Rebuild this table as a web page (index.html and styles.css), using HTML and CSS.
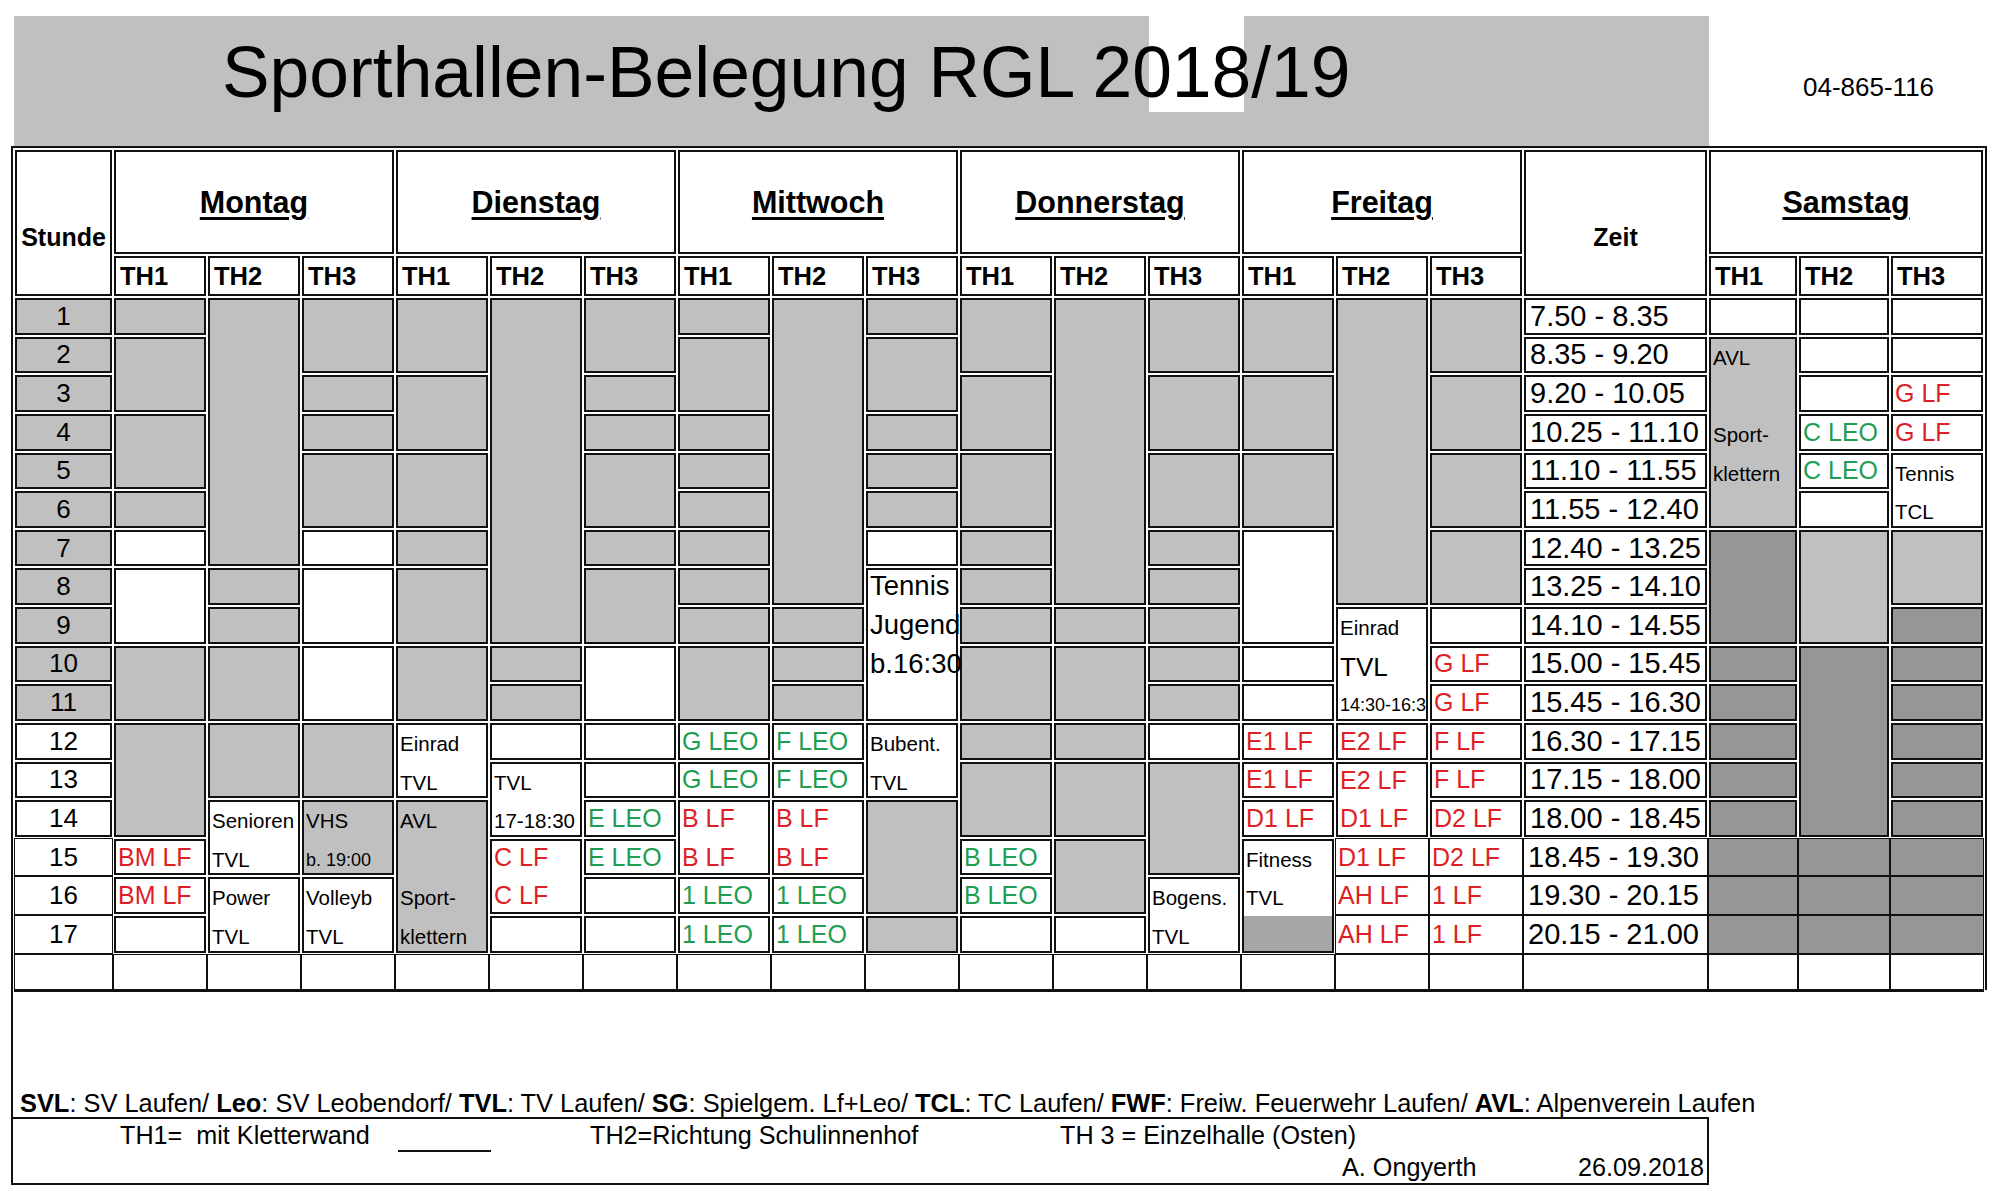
FILE: index.html
```
<!DOCTYPE html>
<html lang="de">
<head>
<meta charset="utf-8">
<title>Sporthallen-Belegung RGL 2018/19</title>
<link rel="stylesheet" href="styles.css">
</head>
<body>
<div class="titlebar">
  <div class="title"><span>Sporthallen-Belegung RGL 2018/19</span></div>
  <div class="code">04-865-116</div>
</div>
<div class="sheet">
  <div class="tbl">
    <div class="grid">
      <!-- header -->
      <div class="c hs r2">Stunde</div>
      <div class="c hd s3">Montag</div>
      <div class="c hd s3">Dienstag</div>
      <div class="c hd s3">Mittwoch</div>
      <div class="c hd s3">Donnerstag</div>
      <div class="c hd s3">Freitag</div>
      <div class="c hs r2">Zeit</div>
      <div class="c hd s3">Samstag</div>
      <div class="c th">TH1</div><div class="c th">TH2</div><div class="c th">TH3</div>
      <div class="c th">TH1</div><div class="c th">TH2</div><div class="c th">TH3</div>
      <div class="c th">TH1</div><div class="c th">TH2</div><div class="c th">TH3</div>
      <div class="c th">TH1</div><div class="c th">TH2</div><div class="c th">TH3</div>
      <div class="c th">TH1</div><div class="c th">TH2</div><div class="c th">TH3</div>
      <div class="c th">TH1</div><div class="c th">TH2</div><div class="c th">TH3</div>

      <!-- row 1 -->
      <div class="c n g">1</div>
      <div class="c g"></div>
      <div class="c g r7"></div>
      <div class="c g r2"></div>
      <div class="c g r2"></div>
      <div class="c g r9"></div>
      <div class="c g r2"></div>
      <div class="c g"></div>
      <div class="c g r8"></div>
      <div class="c g"></div>
      <div class="c g r2"></div>
      <div class="c g r8"></div>
      <div class="c g r2"></div>
      <div class="c g r2"></div>
      <div class="c g r8"></div>
      <div class="c g r2"></div>
      <div class="c t">7.50 - 8.35</div>
      <div class="c"></div>
      <div class="c"></div>
      <div class="c"></div>

      <!-- row 2 -->
      <div class="c n g">2</div>
      <div class="c g r2"></div>
      <div class="c g r2"></div>
      <div class="c g r2"></div>
      <div class="c t">8.35 - 9.20</div>
      <div class="c g r5 ml"><div>AVL</div><div>&nbsp;</div><div>Sport-</div><div>klettern</div></div>
      <div class="c"></div>
      <div class="c"></div>

      <!-- row 3 -->
      <div class="c n g">3</div>
      <div class="c g"></div>
      <div class="c g r2"></div>
      <div class="c g"></div>
      <div class="c g r2"></div>
      <div class="c g r2"></div>
      <div class="c g r2"></div>
      <div class="c g r2"></div>
      <div class="c t">9.20 - 10.05</div>
      <div class="c"></div>
      <div class="c lab red">G LF</div>

      <!-- row 4 -->
      <div class="c n g">4</div>
      <div class="c g r2"></div>
      <div class="c g"></div>
      <div class="c g"></div>
      <div class="c g"></div>
      <div class="c g"></div>
      <div class="c t">10.25 - 11.10</div>
      <div class="c lab grn">C LEO</div>
      <div class="c lab red">G LF</div>

      <!-- row 5 -->
      <div class="c n g">5</div>
      <div class="c g r2"></div>
      <div class="c g r2"></div>
      <div class="c g r2"></div>
      <div class="c g"></div>
      <div class="c g"></div>
      <div class="c g r2"></div>
      <div class="c g r2"></div>
      <div class="c g r2"></div>
      <div class="c g r2"></div>
      <div class="c t">11.10 - 11.55</div>
      <div class="c lab grn">C LEO</div>
      <div class="c r2 ml"><div>Tennis</div><div>TCL</div></div>

      <!-- row 6 -->
      <div class="c n g">6</div>
      <div class="c g"></div>
      <div class="c g"></div>
      <div class="c g"></div>
      <div class="c t">11.55 - 12.40</div>
      <div class="c"></div>

      <!-- row 7 -->
      <div class="c n g">7</div>
      <div class="c"></div>
      <div class="c"></div>
      <div class="c g"></div>
      <div class="c g"></div>
      <div class="c g"></div>
      <div class="c"></div>
      <div class="c g"></div>
      <div class="c g"></div>
      <div class="c r3"></div>
      <div class="c g r2"></div>
      <div class="c t">12.40 - 13.25</div>
      <div class="c dg r3"></div>
      <div class="c g r3"></div>
      <div class="c g r2"></div>

      <!-- row 8 -->
      <div class="c n g">8</div>
      <div class="c r2"></div>
      <div class="c g"></div>
      <div class="c r2"></div>
      <div class="c g r2"></div>
      <div class="c g r2"></div>
      <div class="c g"></div>
      <div class="c r4 ml mid big over"><div>Tennis</div><div>Jugend</div><div>b.16:30</div></div>
      <div class="c g"></div>
      <div class="c g"></div>
      <div class="c t">13.25 - 14.10</div>

      <!-- row 9 -->
      <div class="c n g">9</div>
      <div class="c g"></div>
      <div class="c g"></div>
      <div class="c g"></div>
      <div class="c g"></div>
      <div class="c g"></div>
      <div class="c g"></div>
      <div class="c r3 ml clip"><div>Einrad</div><div class="bigl">TVL</div><div class="sm">14:30-16:3</div></div>
      <div class="c"></div>
      <div class="c t">14.10 - 14.55</div>
      <div class="c dg"></div>

      <!-- row 10 -->
      <div class="c n g">10</div>
      <div class="c g r2"></div>
      <div class="c g r2"></div>
      <div class="c r2"></div>
      <div class="c g r2"></div>
      <div class="c g"></div>
      <div class="c r2"></div>
      <div class="c g r2"></div>
      <div class="c g"></div>
      <div class="c g r2"></div>
      <div class="c g r2"></div>
      <div class="c g"></div>
      <div class="c"></div>
      <div class="c lab red">G LF</div>
      <div class="c t">15.00 - 15.45</div>
      <div class="c dg"></div>
      <div class="c dg r5"></div>
      <div class="c dg"></div>

      <!-- row 11 -->
      <div class="c n g">11</div>
      <div class="c g"></div>
      <div class="c g"></div>
      <div class="c g"></div>
      <div class="c"></div>
      <div class="c lab red">G LF</div>
      <div class="c t">15.45 - 16.30</div>
      <div class="c dg"></div>
      <div class="c dg"></div>

      <!-- row 12 -->
      <div class="c n">12</div>
      <div class="c g r3"></div>
      <div class="c g r2"></div>
      <div class="c g r2"></div>
      <div class="c r2 ml"><div>Einrad</div><div>TVL</div></div>
      <div class="c"></div>
      <div class="c"></div>
      <div class="c lab grn">G LEO</div>
      <div class="c lab grn">F LEO</div>
      <div class="c r2 ml"><div>Bubent.</div><div>TVL</div></div>
      <div class="c g"></div>
      <div class="c g"></div>
      <div class="c"></div>
      <div class="c lab red">E1 LF</div>
      <div class="c lab red">E2 LF</div>
      <div class="c lab red">F LF</div>
      <div class="c t">16.30 - 17.15</div>
      <div class="c dg"></div>
      <div class="c dg"></div>

      <!-- row 13 -->
      <div class="c n">13</div>
      <div class="c r2 ml"><div>TVL</div><div>17-18:30</div></div>
      <div class="c"></div>
      <div class="c lab grn">G LEO</div>
      <div class="c lab grn">F LEO</div>
      <div class="c g r2"></div>
      <div class="c g r2"></div>
      <div class="c g r3"></div>
      <div class="c lab red">E1 LF</div>
      <div class="c r2 ml mid lbl red"><div>E2 LF</div><div>D1 LF</div></div>
      <div class="c lab red">F LF</div>
      <div class="c t">17.15 - 18.00</div>
      <div class="c dg"></div>
      <div class="c dg"></div>

      <!-- row 14 -->
      <div class="c n">14</div>
      <div class="c r2 ml"><div>Senioren</div><div>TVL</div></div>
      <div class="c g r2 ml"><div>VHS</div><div class="sm">b. 19:00</div></div>
      <div class="c g r4 ml"><div>AVL</div><div>&nbsp;</div><div>Sport-</div><div>klettern</div></div>
      <div class="c lab grn">E LEO</div>
      <div class="c r2 ml mid lbl red"><div>B LF</div><div>B LF</div></div>
      <div class="c r2 ml mid lbl red"><div>B LF</div><div>B LF</div></div>
      <div class="c g r3"></div>
      <div class="c lab red">D1 LF</div>
      <div class="c lab red">D2 LF</div>
      <div class="c t">18.00 - 18.45</div>
      <div class="c dg"></div>
      <div class="c dg"></div>

      <!-- row 15 -->
      <div class="c n sg">15</div>
      <div class="c lab red">BM LF</div>
      <div class="c r2 ml mid lbl red"><div>C LF</div><div>C LF</div></div>
      <div class="c lab grn">E LEO</div>
      <div class="c lab grn">B LEO</div>
      <div class="c g r2"></div>
      <div class="c r3 ml fit"><div>Fitness</div><div>TVL</div></div>
      <div class="c lab red sg">D1 LF</div>
      <div class="c lab red sg">D2 LF</div>
      <div class="c t sg">18.45 - 19.30</div>
      <div class="c dg sg"></div>
      <div class="c dg sg"></div>
      <div class="c dg sg"></div>

      <!-- row 16 -->
      <div class="c n sg">16</div>
      <div class="c lab red">BM LF</div>
      <div class="c r2 ml"><div>Power</div><div>TVL</div></div>
      <div class="c r2 ml"><div>Volleyb</div><div>TVL</div></div>
      <div class="c"></div>
      <div class="c lab grn">1 LEO</div>
      <div class="c lab grn">1 LEO</div>
      <div class="c lab grn">B LEO</div>
      <div class="c r2 ml"><div>Bogens.</div><div>TVL</div></div>
      <div class="c lab red sg">AH LF</div>
      <div class="c lab red sg">1 LF</div>
      <div class="c t sg">19.30 - 20.15</div>
      <div class="c dg sg"></div>
      <div class="c dg sg"></div>
      <div class="c dg sg"></div>

      <!-- row 17 -->
      <div class="c n sg">17</div>
      <div class="c"></div>
      <div class="c"></div>
      <div class="c"></div>
      <div class="c lab grn">1 LEO</div>
      <div class="c lab grn">1 LEO</div>
      <div class="c g"></div>
      <div class="c"></div>
      <div class="c"></div>
      <div class="c lab red sg">AH LF</div>
      <div class="c lab red sg">1 LF</div>
      <div class="c t sg">20.15 - 21.00</div>
      <div class="c dg sg"></div>
      <div class="c dg sg"></div>
      <div class="c dg sg"></div>

      <!-- empty row -->
      <div class="c e"></div><div class="c e"></div><div class="c e"></div><div class="c e"></div>
      <div class="c e"></div><div class="c e"></div><div class="c e"></div><div class="c e"></div>
      <div class="c e"></div><div class="c e"></div><div class="c e"></div><div class="c e"></div>
      <div class="c e"></div><div class="c e"></div><div class="c e"></div><div class="c e"></div>
      <div class="c e"></div><div class="c e"></div><div class="c e"></div><div class="c e"></div>
    </div>
  </div>
  <div class="foot">
    <p class="legend"><b>SVL</b>: SV Laufen/ <b>Leo</b>: SV Leobendorf/ <b>TVL</b>: TV Laufen/ <b>SG</b>: Spielgem. Lf+Leo/ <b>TCL</b>: TC Laufen/ <b>FWF</b>: Freiw. Feuerwehr Laufen/ <b>AVL</b>: Alpenverein Laufen</p>
    <div class="box">
      <div class="bl1"><span class="k1">TH1=&nbsp; mit Kletterwand</span><span class="uline"></span><span class="k3">TH2=Richtung Schulinnenhof</span><span>TH 3 = Einzelhalle (Osten)</span></div>
      <div class="bl2"><span class="k4">A. Ongyerth</span><span>26.09.2018</span></div>
    </div>
  </div>
</div>
</body>
</html>
```
FILE: styles.css
```
* { box-sizing: border-box; }
html, body { margin: 0; padding: 0; background: #fff; }
body {
  font-family: "Liberation Sans", Arial, Helvetica, sans-serif;
  color: #000;
  width: 2000px;
  height: 1194px;
  overflow: hidden;
}

/* title */
.titlebar { display: flex; align-items: flex-start; margin: 16px 0 0 14px; }
.title {
  position: relative;
  width: 1695px;
  height: 130px;
  background: #c0c0c0;
  padding: 21px 0 0 208px;
  font-size: 71.4px;
  line-height: 71px;
  white-space: nowrap;
}
.title::before {
  content: "";
  position: absolute;
  left: 1135px;
  top: 0;
  width: 95px;
  height: 96px;
  background: #fff;
}
.title span { position: relative; }
.code { margin: 56px 0 0 94px; font-size: 26px; line-height: 30px; white-space: nowrap; }

/* sheet & table */
.sheet { margin-left: 11px; width: 1976px; border-left: 2px solid #111; }
.tbl { border-top: 2px solid #111; border-right: 2px solid #111; padding: 2px 2px 0 2px; }
.grid {
  display: grid;
  grid-template-columns: 97px repeat(15, 92px) 183px 88px 90px 92px;
  grid-template-rows: 104px 40px repeat(17, 36.63px) 35px;
  gap: 2px;
}

.c { border: 2px solid #111; background: #fff; min-width: 0; min-height: 0; white-space: nowrap; }
.g { background: #c0c0c0; }
.dg { background: #969696; }
.r2 { grid-row: span 2; }
.r3 { grid-row: span 3; }
.r4 { grid-row: span 4; }
.r5 { grid-row: span 5; }
.r7 { grid-row: span 7; }
.r8 { grid-row: span 8; }
.r9 { grid-row: span 9; }
.s3 { grid-column: span 3; }
.sg { border-width: 1px; margin: -1px; }
.e { border-width: 1px 1px 3px 1px; margin: -1px -1px -2px -1px; }

.hd {
  display: flex; align-items: center; justify-content: center;
  font-weight: bold; font-size: 30.5px;
  text-decoration: underline; text-decoration-thickness: 3px; text-underline-offset: 4px;
}
.hs {
  display: flex; align-items: center; justify-content: center;
  font-weight: bold; font-size: 25px; padding-top: 28px;
}
.th { display: flex; align-items: center; font-weight: bold; font-size: 25.5px; padding-left: 4px; }
.n { display: flex; align-items: center; justify-content: center; font-size: 26px; }
.t { display: flex; align-items: center; font-size: 29px; padding-left: 4px; }
.lab { display: flex; align-items: center; font-size: 25px; padding-left: 2px; }
.red { color: #dd1f26; }
.grn { color: #1f9e53; }

.ml { font-size: 20.5px; line-height: 38.63px; padding-left: 2px; }
.ml > div { height: 38.63px; }
.mid > div:first-child { margin-top: -3px; }
.lbl { font-size: 25px; }
.big { font-size: 27.5px; }
.bigl { font-size: 26px; }
.sm { font-size: 18px; }
.clip { overflow: hidden; }
.over { position: relative; z-index: 1; }
.fit { background: linear-gradient(to bottom, #fff 74.6px, #a6a6a6 74.6px); }

/* footer */
.foot { padding-top: 99px; }
.legend { margin: 0; padding-left: 7px; font-size: 25.4px; line-height: 28px; white-space: nowrap; }
.box {
  width: 1696px;
  height: 68px;
  border-top: 2px solid #111;
  border-right: 2px solid #111;
  border-bottom: 2px solid #111;
  font-size: 25.2px;
}
.bl1 { display: flex; height: 32px; line-height: 32px; padding-left: 107px; white-space: nowrap; }
.k1 { width: 278px; }
.uline { width: 93px; height: 33px; border-bottom: 2px solid #111; margin-right: 99px; }
.k3 { width: 470px; }
.bl2 { display: flex; height: 32px; line-height: 32px; padding-left: 1329px; white-space: nowrap; }
.k4 { width: 236px; }
```
